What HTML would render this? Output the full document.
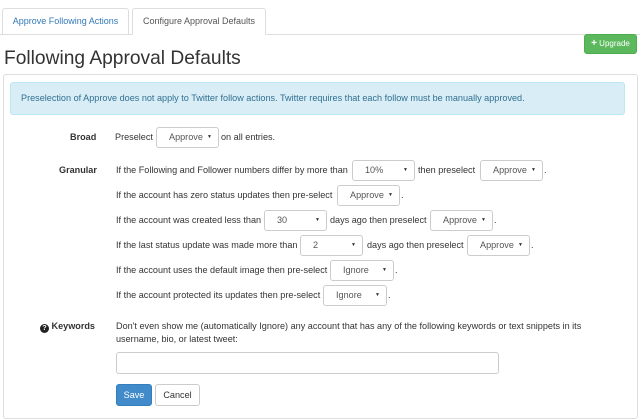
<!DOCTYPE html>
<html><head><meta charset="utf-8"><style>
*{box-sizing:border-box;margin:0;padding:0}
body{width:640px;height:410px;overflow:hidden;background:#fff;font-family:"Liberation Sans",Arial,sans-serif;font-size:9.1px;color:#333;position:relative}
.a{position:absolute;white-space:nowrap}
.tab{position:absolute;top:8px;height:27px;border:1px solid #ddd;border-radius:3px 3px 0 0;line-height:25px;text-align:center;font-size:9px}
.sel{position:absolute;height:21px;border:1px solid #ccc;border-radius:3px;background:#fff;line-height:19px;padding-left:12px;color:#555;font-size:9.1px}
.sel:after{content:"▼";position:absolute;right:6px;top:0;font-size:5px;color:#333}
.t{position:absolute;white-space:nowrap;line-height:12px}
</style></head><body>
<div class="a" style="left:0;top:34px;width:640px;height:1px;background:#ddd"></div>
<div class="tab" style="left:2px;width:127px;color:#337ab7;border-bottom-color:#ddd">Approve Following Actions</div>
<div class="tab" style="left:132px;width:134px;color:#555;background:#fff;border-bottom-color:#fff">Configure Approval Defaults</div>
<div class="a" style="left:584px;top:34px;width:53px;height:20px;background:#5cb85c;border:1px solid #4cae4c;border-radius:3px;color:#fff;font-size:8px;line-height:18px;text-align:center"><b style="font-size:10px">+</b> Upgrade</div>
<div class="a" style="left:4px;top:46px;font-size:19.2px;color:#333;line-height:26px">Following Approval Defaults</div>
<div class="a" style="left:3px;top:74px;width:635px;height:345px;border:1px solid #ddd;border-radius:3px"></div>
<div class="a" style="left:10px;top:82px;width:615px;height:33px;background:#d9edf7;border:1px solid #bce8f1;border-radius:3px;color:#31708f;line-height:31px;padding-left:10px">Preselection of Approve does not apply to Twitter follow actions. Twitter requires that each follow must be manually approved.</div>

<div class="t" style="left:70px;top:131px;font-weight:bold">Broad</div>
<div class="t" style="left:115px;top:131px">Preselect</div>
<div class="sel" style="left:156px;top:127px;width:63px">Approve</div>
<div class="t" style="left:221px;top:131px">on all entries.</div>

<div class="t" style="left:59px;top:164px;font-weight:bold">Granular</div>
<div class="t" style="left:116px;top:164px">If the Following and Follower numbers differ by more than</div>
<div class="sel" style="left:352px;top:160px;width:63px">10%</div>
<div class="t" style="left:418px;top:164px">then preselect</div>
<div class="sel" style="left:480px;top:160px;width:63px">Approve</div>
<div class="t" style="left:544px;top:164px">.</div>

<div class="t" style="left:116px;top:189px">If the account has zero status updates then pre-select</div>
<div class="sel" style="left:337px;top:185px;width:63px">Approve</div>
<div class="t" style="left:401px;top:189px">.</div>

<div class="t" style="left:116px;top:214px">If the account was created less than</div>
<div class="sel" style="left:264px;top:210px;width:63px">30</div>
<div class="t" style="left:330px;top:214px">days ago then preselect</div>
<div class="sel" style="left:430px;top:210px;width:63px">Approve</div>
<div class="t" style="left:494px;top:214px">.</div>

<div class="t" style="left:116px;top:239px">If the last status update was made more than</div>
<div class="sel" style="left:300px;top:235px;width:63px">2</div>
<div class="t" style="left:367px;top:239px">days ago then preselect</div>
<div class="sel" style="left:467px;top:235px;width:63px">Approve</div>
<div class="t" style="left:531px;top:239px">.</div>

<div class="t" style="left:116px;top:264px">If the account uses the default image then pre-select</div>
<div class="sel" style="left:330px;top:260px;width:64px">Ignore</div>
<div class="t" style="left:395px;top:264px">.</div>

<div class="t" style="left:116px;top:289px">If the account protected its updates then pre-select</div>
<div class="sel" style="left:323px;top:285px;width:64px">Ignore</div>
<div class="t" style="left:388px;top:289px">.</div>

<div class="t" style="left:40px;top:320px;font-weight:bold"><span style="display:inline-block;width:9px;height:9px;border-radius:50%;background:#222;color:#fff;font-size:7px;line-height:9px;text-align:center;vertical-align:-1px">?</span> Keywords</div>
<div class="t" style="left:116px;top:320px;line-height:13px">Don't even show me (automatically Ignore) any account that has any of the following keywords or text snippets in its<br>username, bio, or latest tweet:</div>
<div class="a" style="left:116px;top:352px;width:383px;height:22px;border:1px solid #ccc;border-radius:3px"></div>
<div class="a" style="left:116px;top:384px;width:36px;height:22px;background:#428bca;border:1px solid #357ebd;border-radius:3px;color:#fff;text-align:center;line-height:20px">Save</div>
<div class="a" style="left:155px;top:384px;width:45px;height:22px;background:#fff;border:1px solid #ccc;border-radius:3px;color:#333;text-align:center;line-height:20px">Cancel</div>
</body></html>
